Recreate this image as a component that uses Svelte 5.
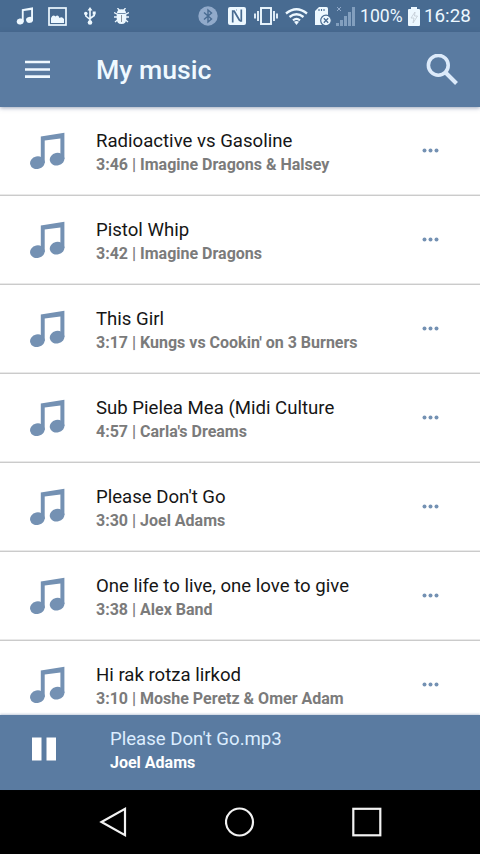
<script lang="ts">
    interface Track {
        title: string;
        time: string;
        artist: string;
    }

    const tracks: Track[] = [
        { title: "Radioactive vs Gasoline", time: "3:46", artist: "Imagine Dragons & Halsey" },
        { title: "Pistol Whip", time: "3:42", artist: "Imagine Dragons" },
        { title: "This Girl", time: "3:17", artist: "Kungs vs Cookin' on 3 Burners" },
        { title: "Sub Pielea Mea (Midi Culture", time: "4:57", artist: "Carla's Dreams" },
        { title: "Please Don't Go", time: "3:30", artist: "Joel Adams" },
        { title: "One life to live, one love to give", time: "3:38", artist: "Alex Band" },
        { title: "Hi rak rotza lirkod", time: "3:10", artist: "Moshe Peretz & Omer Adam" },
    ];

    let playing = $state(true);
    let current = $state(tracks[4]);

    function select(track: Track): void {
        current = track;
        playing = true;
    }
</script>

{#snippet note()}
    <svg class="note" viewBox="0 0 35 38" fill="currentColor">
        <path d="M10.800 4.500 L34.400 .7 V27 H30.400 V6.500 L14.700 8.500 V31 H10.800 Z" />
        <ellipse cx="7.400" cy="30.700" rx="7.400" ry="6.300" transform="rotate(-12 7.400 30.700)" />
        <ellipse cx="27.100" cy="27.200" rx="7.400" ry="6.300" transform="rotate(-12 27.100 27.200)" />
    </svg>
{/snippet}

<main>
    <div class="status">
        <div class="notices">
            <div class="status-note">{@render note()}</div>
            <svg class="image" width="19" height="19" viewBox="0 0 19 19">
                <rect x="1" y="1" width="17" height="17" fill="none" stroke="currentColor" stroke-width="1.700" />
                <path fill="currentColor" d="M3 16 V11 Q5 7 7.500 9.500 Q10 7 11.500 11 Q14 9 16 12 V16 Z" />
            </svg>
            <svg class="usb" width="12" height="18" viewBox="0 0 12 18" fill="none" stroke="currentColor" stroke-width="1.600">
                <path d="M6 2 V15 M1.800 6.500 V9 L6 12.500 M10.200 6 V8.500 L6 11.500" />
                <path fill="currentColor" stroke="none" d="M6 0 L8.500 3.500 H3.500 Z M8.700 4.500 H11.700 V7.500 H8.700 Z" />
                <circle cx="1.800" cy="6.500" r="1.800" fill="currentColor" stroke="none" />
                <circle cx="6" cy="15.500" r="2.300" fill="currentColor" stroke="none" />
            </svg>
            <svg width="15" height="16" viewBox="0 0 15 16">
                <path fill="none" stroke="currentColor" stroke-width="1.300" d="M3.500 0 L5.500 2.500 M11.500 0 L9.500 2.500 M0 4.500 L4 6.500 M15 4.500 L11 6.500 M0 9 H15 M1 14 L4 11.500 M14 14 L11 11.500" />
                <path fill="currentColor" d="M3 5 Q3 1.200 7.500 1.200 Q12 1.200 12 5 Z M2.700 5.700 H12.300 V10.500 Q12.300 16 7.500 16 Q2.700 16 2.700 10.500 Z" />
                <path stroke="#8b9299" d="M7.500 7 V14" />
            </svg>
        </div>

        <div class="system">
            <svg width="20" height="20" viewBox="0 0 20 20">
                <circle cx="10" cy="10" r="9.700" fill="#91aaca" />
                <path fill="none" stroke="#486b91" stroke-width="1.400" d="M6 6.500 L13.500 13 L10 16 V4 L13.500 7 L6 13.500" />
            </svg>
            <svg class="nfc" width="18" height="18" viewBox="0 0 18 18">
                <rect width="18" height="18" rx="2" fill="currentColor" />
                <path fill="none" stroke="#486b91" stroke-width="1.700" d="M4.700 15.500 V4.200 H6.200 L11.800 13.800 M8 3 H8.500 M13.300 2.500 V13.800 H11.800" />
            </svg>
            <svg class="vibrate" width="24" height="18" viewBox="0 0 24 18" fill="none" stroke="currentColor">
                <rect x="7" y="1" width="10" height="16" stroke-width="1.900" />
                <path stroke-width="1.800" d="M4 4 V14 M20 4 V14 M1 6.500 V11.500 M23 6.500 V11.500" />
            </svg>
            <svg class="wifi" width="23" height="17" viewBox="0 0 23 17" fill="none" stroke="currentColor" stroke-width="2.300">
                <path d="M1 5.500 Q11.500 -3 22 5.500 M4.500 9 Q11.500 3.500 18.500 9 M8 12.300 Q11.500 9.500 15 12.300" />
                <path fill="currentColor" stroke="none" d="M9 13.800 Q11.500 12 14 13.800 L11.500 17 Z" />
            </svg>
            <svg class="sd" width="17" height="20" viewBox="0 0 17 20">
                <path fill="currentColor" d="M4 1 H11.500 Q13 1 13 2.500 V19 H0 V5 Z" />
                <path stroke="#486b91" stroke-width="1.100" d="M4 3 V5 M6.500 3 V5 M9 3 V5" />
                <circle cx="11" cy="14.500" r="5.300" fill="currentColor" stroke="#486b91" stroke-width="1.200" />
                <path stroke="#486b91" stroke-width="1.300" d="M8.800 12.300 L13.200 16.700 M13.200 12.300 L8.800 16.700" />
            </svg>
            <svg class="signal" width="19" height="20" viewBox="0 0 19 20">
                <path fill="#829fbe" d="M0 17 H3 V20 H0 Z M4 14 H7 V20 H4 Z M8 10 H11 V20 H8 Z M12 6 H15 V20 H12 Z M16 1 H19 V20 H16 Z" />
                <path stroke="#91aaca" d="M1 1 L5 5 M5 1 L1 5" />
            </svg>
            <span class="percent">100%</span>
            <svg class="battery" width="12" height="19" viewBox="0 0 12 19">
                <path fill="currentColor" d="M3 0 H9 V2 H11 Q12 2 12 3 V18 Q12 19 11 19 H1 Q0 19 0 18 V3 Q0 2 1 2 H3 Z" />
                <path fill="none" stroke="#c1cad3" stroke-width=".8" d="M7 5 L3 11 H6 L5 16 L9.500 9 H6.500 Z" />
            </svg>
            <span class="clock">16:28</span>
        </div>
    </div>

    <header>
        <button class="menu" aria-label="Menu">
            <svg width="26" height="20" viewBox="0 0 26 20" stroke="currentColor" stroke-width="2.700">
                <path d="M0 2 H25 M0 9.500 H25 M0 16.700 H25" />
            </svg>
        </button>
        <h1>My music</h1>
        <button class="search" aria-label="Search">
            <svg width="32" height="32" viewBox="0 0 32 32" fill="none" stroke="currentColor">
                <circle cx="12.300" cy="11.300" r="9.900" stroke-width="3.600" />
                <path stroke-width="4" d="M19.500 18.500 L30.500 29.500" />
            </svg>
        </button>
    </header>

    <ul>
        {#each tracks as track}
            <li>
                {@render note()}
                <button class="info" onclick={() => select(track)}>
                    <span class="title">{track.title}</span>
                    <span class="artist">{track.time} | {track.artist}</span>
                </button>
                <button class="more" aria-label="More">
                    <svg width="17" height="5" viewBox="0 0 17 5" fill="currentColor">
                        <circle cx="2.500" cy="2.500" r="2" />
                        <circle cx="8.500" cy="2.500" r="2" />
                        <circle cx="14.500" cy="2.500" r="2" />
                    </svg>
                </button>
            </li>
        {/each}
    </ul>

    <footer>
        <button class="toggle" aria-label="Play or pause" onclick={() => (playing = !playing)}>
            <svg width="24" height="24" viewBox="0 0 24 24" fill="currentColor">
                {#if playing}
                    <path d="M0 .5 H9.500 V23.500 H0 Z M14.500 .5 H24 V23.500 H14.500 Z" />
                {:else}
                    <path d="M2 0 L24 12 L2 24 Z" />
                {/if}
            </svg>
        </button>
        <div class="now">
            <span class="title">{current.title}.mp3</span>
            <span class="artist">{current.artist}</span>
        </div>
    </footer>

    <nav>
        <svg width="30" height="32" viewBox="0 0 30 32"><path d="M3.500 16 L27 2.800 V29.200 Z" /></svg>
        <svg width="30" height="32" viewBox="0 0 30 32"><circle cx="14.500" cy="16" r="13.500" /></svg>
        <svg width="30" height="32" viewBox="0 0 30 32"><rect x="1.300" y="2.800" width="27" height="26.500" /></svg>
    </nav>
</main>

<style>
    :global(body) {
        margin: 0;
    }
    main {
        display: flex;
        flex-direction: column;
        width: 480px;
        height: 854px;
        overflow: hidden;
        background: #fff;
        font-family: Roboto, "Liberation Sans", sans-serif;
    }
    svg {
        display: block;
        flex-shrink: 0;
    }
    button {
        padding: 0;
        border: none;
        background: none;
        color: inherit;
        font: inherit;
        text-align: left;
        cursor: pointer;
    }
    .status {
        display: flex;
        justify-content: space-between;
        flex-shrink: 0;
        height: 32px;
        box-sizing: border-box;
        padding: 0 10px 0 16px;
        background: #486b91;
        color: #edf8ff;
    }
    .notices,
    .system {
        display: flex;
        align-items: center;
    }
    .notices {
        gap: 14px;
    }
    .status-note .note {
        width: 18px;
        height: 18px;
    }
    .image {
        margin-right: 3px;
    }
    .usb {
        margin-right: 4px;
    }
    .nfc {
        margin-left: 10px;
    }
    .vibrate {
        margin-left: 8px;
    }
    .wifi {
        margin-left: 7px;
    }
    .sd {
        margin-left: 7px;
    }
    .signal {
        margin-left: 4px;
    }
    .percent {
        width: 42px;
        margin-left: 5px;
        font-size: 17.6px;
        white-space: nowrap;
    }
    .battery {
        margin-left: 6px;
    }
    .clock {
        width: 46px;
        margin-left: 4px;
        font-size: 18.8px;
    }
    header {
        display: flex;
        align-items: center;
        flex-shrink: 0;
        height: 75px;
        box-sizing: border-box;
        padding: 0 22px 0 25px;
        background: #5a7ba1;
        box-shadow: 0 1px 4px rgba(60, 80, 120, 0.5);
        color: #f0f9ff;
        z-index: 1;
    }
    h1 {
        flex: 1;
        margin: 0 0 0 45px;
        font-size: 26.67px;
        font-weight: 500;
    }
    .search {
        color: #dceafa;
    }
    ul {
        flex: 1;
        min-height: 0;
        margin: 0;
        padding: 0;
        overflow: hidden;
        list-style: none;
    }
    li {
        display: flex;
        align-items: center;
        height: 89px;
        box-sizing: border-box;
        padding: 0 41px 1px 30px;
        border-bottom: 1px solid #cbcbcb;
        box-shadow: inset 0 -1px #e9e9e9;
        color: #7491b3;
    }
    .note {
        width: 35px;
        height: 38px;
    }
    .info {
        flex: 1;
        margin: 3px 0 0 31px;
    }
    .title,
    .artist {
        display: block;
        white-space: nowrap;
    }
    .title {
        font-size: 18.6px;
        line-height: 24px;
    }
    .artist {
        font-size: 16px;
        font-weight: 700;
        line-height: 23px;
    }
    li .title {
        color: #161616;
    }
    li .artist {
        color: #7b7b7b;
    }
    footer {
        display: flex;
        flex-shrink: 0;
        height: 75px;
        box-sizing: border-box;
        padding: 11px 32px;
        background: #5a7ba1;
        box-shadow: 0 -1px 2px rgba(60, 90, 140, 0.3);
        color: #fff;
        z-index: 1;
    }
    .toggle {
        height: 45px;
    }
    .now {
        margin: 1px 0 0 54px;
    }
    .now .title {
        color: #dcedff;
    }
    nav {
        display: flex;
        justify-content: center;
        align-items: center;
        gap: 97px;
        flex-shrink: 0;
        height: 64px;
        background: #000;
    }
    nav svg {
        fill: none;
        stroke: #f2f2f2;
        stroke-width: 2.200;
    }
</style>
